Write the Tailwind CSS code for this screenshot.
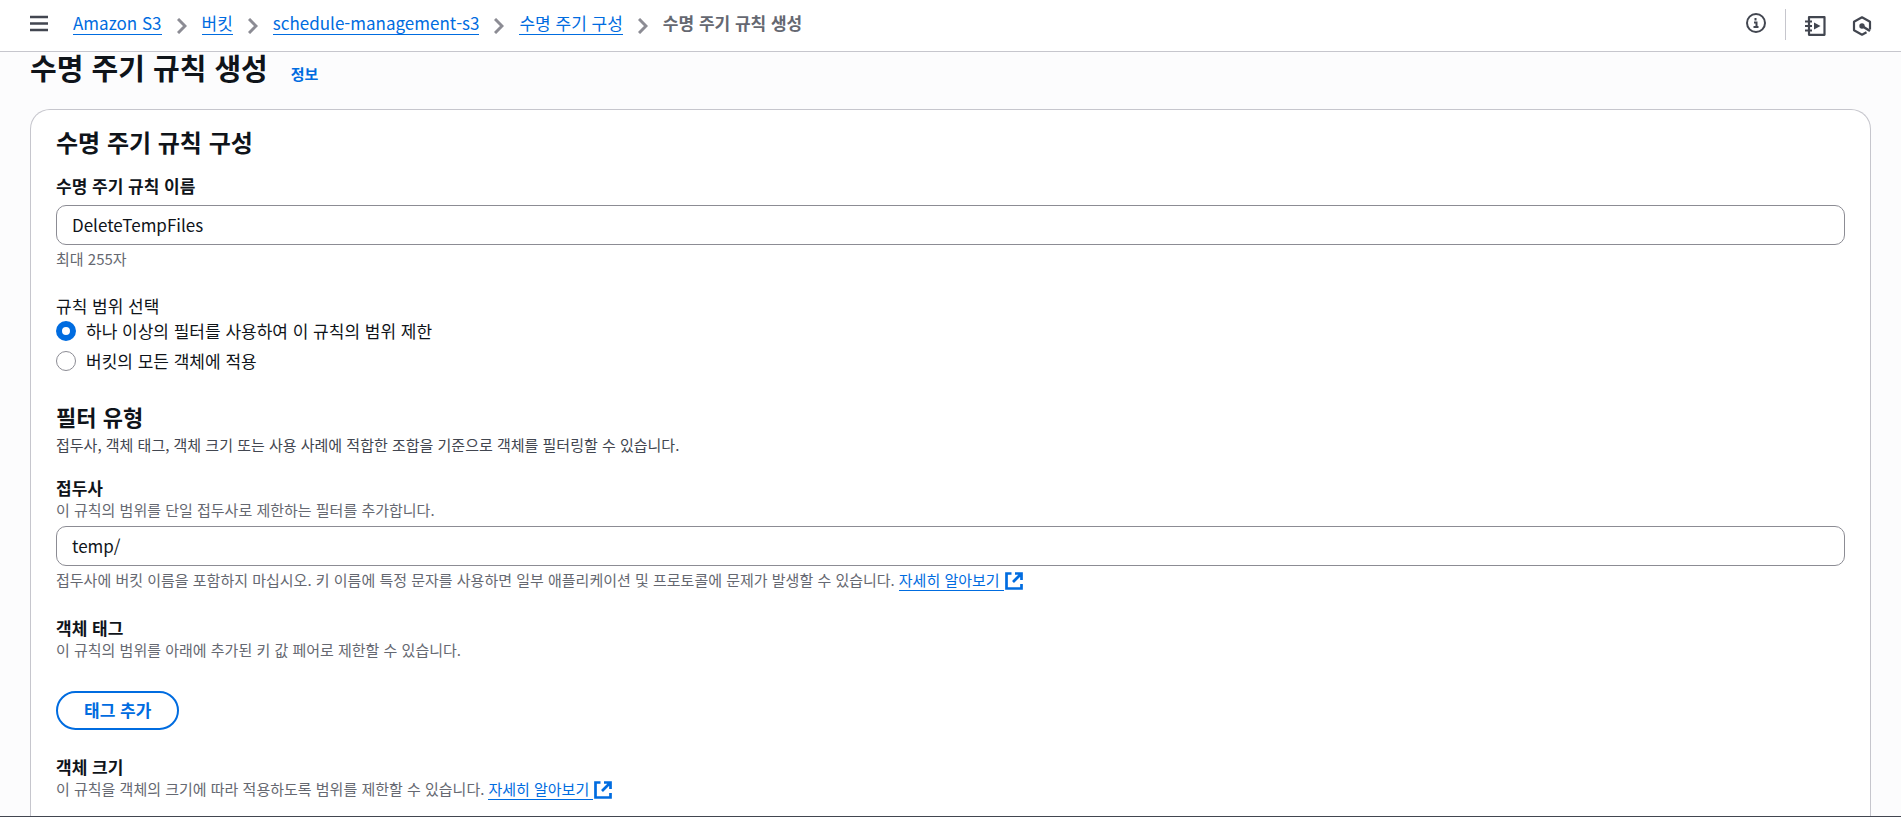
<!DOCTYPE html>
<html lang="ko">
<head>
    <meta charset="UTF-8">
    <meta name="viewport" content="width=device-width, initial-scale=1.0">
    <title>수명 주기 규칙 생성</title>
    <script src="https://cdn.jsdelivr.net/npm/@tailwindcss/browser@4"></script>
    <style>
        body { font-family: 'Noto Sans CJK KR', 'Noto Sans', sans-serif; }
    </style>
</head>
<body class="h-screen flex flex-col overflow-hidden bg-[#fcfcfd] text-[#0f141a] text-[17px] leading-[25px] border-b border-[#424650]">
    <!-- Top bar -->
    <header class="shrink-0 h-[52px] flex items-center justify-between bg-white border-b border-[#c6c6cd] pl-[30px] pr-[29px]">
        <div class="flex items-center">
            <button type="button" aria-label="메뉴" class="mr-[25px] text-[#424650]">
                <svg class="block w-[18px] h-[18px] mb-[6px]" viewBox="0 0 18 18" fill="none" stroke="currentColor" stroke-width="2.400"><path d="M0 3h18M0 9.500h18M0 16h18"/></svg>
            </button>
            <nav aria-label="탐색 경로">
                <ol class="flex items-center gap-[15px] pb-[6px] leading-[23px]">
                    <li><a href="#" class="block border-b border-[#006ce0] text-[#006ce0]">Amazon S3</a></li>
                    <li aria-hidden="true"><svg class="block w-[10px] h-[16px] mt-[6px] text-[#8c8c94]" viewBox="0 0 10 16" fill="none" stroke="currentColor" stroke-width="3"><path d="M1 1l7 7-7 7"/></svg></li>
                    <li><a href="#" class="block border-b border-[#006ce0] text-[#006ce0]">버킷</a></li>
                    <li aria-hidden="true"><svg class="block w-[10px] h-[16px] mt-[6px] text-[#8c8c94]" viewBox="0 0 10 16" fill="none" stroke="currentColor" stroke-width="3"><path d="M1 1l7 7-7 7"/></svg></li>
                    <li><a href="#" class="block border-b border-[#006ce0] text-[#006ce0]">schedule-management-s3</a></li>
                    <li aria-hidden="true"><svg class="block w-[10px] h-[16px] mt-[6px] text-[#8c8c94]" viewBox="0 0 10 16" fill="none" stroke="currentColor" stroke-width="3"><path d="M1 1l7 7-7 7"/></svg></li>
                    <li><a href="#" class="block border-b border-[#006ce0] text-[#006ce0]">수명 주기 구성</a></li>
                    <li aria-hidden="true"><svg class="block w-[10px] h-[16px] mt-[6px] text-[#8c8c94]" viewBox="0 0 10 16" fill="none" stroke="currentColor" stroke-width="3"><path d="M1 1l7 7-7 7"/></svg></li>
                    <li class="font-bold text-[#656871]">수명 주기 규칙 생성</li>
                </ol>
            </nav>
        </div>
        <div class="flex items-center text-[#424650]">
            <button type="button" aria-label="정보">
                <svg class="block w-5 h-5 mb-[6px]" viewBox="0 0 20 20" fill="none" stroke="currentColor" stroke-width="2"><circle cx="10" cy="10" r="9"/><path d="M9.500 5v2.500M8 9.500h2.500V14M7.500 14h5"/></svg>
            </button>
            <div class="w-px h-[31px] bg-[#c6c6cd] mx-[19px] mb-[2px]"></div>
            <button type="button" aria-label="자습서" class="mr-[26px]">
                <svg class="block w-[21px] h-5 mt-px" viewBox="0 0 21 20" fill="none" stroke="currentColor" stroke-width="2.200"><path d="M4 1.200h15.500v17.600H4z" stroke-linejoin="round"/><path d="M0 5.500h7M0 10h7M0 14.500h7"/><path d="M9 6.500v7l6.500-3.500z" fill="currentColor" stroke="none"/></svg>
            </button>
            <button type="button" aria-label="도구">
                <svg class="block w-5 h-5 mt-px" viewBox="0 0 20 20" fill="none" stroke="currentColor" stroke-width="2.200" stroke-linejoin="round"><path d="M18 13.500V5.700L10 1.300 2 5.700v8.600l8 4.400 4.500-2.500"/><circle cx="10" cy="10" r="2.700" fill="currentColor" stroke="none"/><path d="M10 10l8 5" stroke-width="2.600"/></svg>
            </button>
        </div>
    </header>

    <main class="flex-1 min-h-0 flex flex-col px-[30px]">
        <div class="shrink-0 flex items-baseline gap-[23px] mb-[25px]">
            <h1 class="text-[29px] leading-[30px] font-bold">수명 주기 규칙 생성</h1>
            <a href="#" class="text-[15px] leading-5 font-bold text-[#006ce0]">정보</a>
        </div>

        <!-- Rule configuration -->
        <form class="flex-1 bg-white border border-b-0 border-[#c6c6cd] rounded-t-[20px] px-[25px] pt-[18px]">
            <h2 class="text-[24px] leading-[28px] font-bold mb-[17px]">수명 주기 규칙 구성</h2>

            <div class="mb-6">
                <label for="ruleName" class="block font-bold mb-[7px]">수명 주기 규칙 이름</label>
                <input type="text" id="ruleName" value="DeleteTempFiles" class="block w-full h-10 px-[15px] pb-[2px] bg-white border border-[#8c8c94] rounded-[10px]">
                <p class="text-[15px] leading-5 text-[#656871] mt-1">최대 255자</p>
            </div>

            <fieldset class="mb-[29px]">
                <legend>규칙 범위 선택</legend>
                <div class="flex flex-col gap-[5px]">
                    <label class="flex items-center gap-[10px]">
                        <input type="radio" name="scope" checked class="appearance-none w-5 h-5 rounded-full bg-white border border-[#8c8c94] checked:border-[6px] checked:border-[#006ce0]">
                        하나 이상의 필터를 사용하여 이 규칙의 범위 제한
                    </label>
                    <label class="flex items-center gap-[10px]">
                        <input type="radio" name="scope" class="appearance-none w-5 h-5 rounded-full bg-white border border-[#8c8c94] checked:border-[6px] checked:border-[#006ce0]">
                        버킷의 모든 객체에 적용
                    </label>
                </div>
            </fieldset>

            <div class="mb-5">
                <h3 class="text-[22px] leading-[28px] font-bold mb-[5px]">필터 유형</h3>
                <p class="text-[15px] leading-5 text-[#424650]">접두사, 객체 태그, 객체 크기 또는 사용 사례에 적합한 조합을 기준으로 객체를 필터링할 수 있습니다.</p>
            </div>

            <div class="mb-6">
                <label for="prefix" class="block font-bold">접두사</label>
                <p class="text-[15px] leading-5 text-[#656871] mb-[6px]">이 규칙의 범위를 단일 접두사로 제한하는 필터를 추가합니다.</p>
                <input type="text" id="prefix" value="temp/" class="block w-full h-10 px-[15px] pb-[2px] bg-white border border-[#8c8c94] rounded-[10px]">
                <p class="flex text-[15px] leading-5 text-[#656871] mt-1">
                    접두사에 버킷 이름을 포함하지 마십시오. 키 이름에 특정 문자를 사용하면 일부 애플리케이션 및 프로토콜에 문제가 발생할 수 있습니다.
                    <a href="#" class="flex items-center ml-1 text-[#006ce0]">
                        <span class="border-b border-[#006ce0]">자세히 알아보기&nbsp;</span>
                        <svg class="w-[18px] h-[18px] ml-px" viewBox="0 0 18 18" fill="none" stroke="currentColor" stroke-width="2.700"><path d="M6.500 1.500h-5v15h15V12M10 1.500h6.500V8M16 2L8 10"/></svg>
                    </a>
                </p>
            </div>

            <div class="mb-6">
                <h4 class="font-bold">객체 태그</h4>
                <p class="text-[15px] leading-5 text-[#656871] mb-[31px]">이 규칙의 범위를 아래에 추가된 키 값 페어로 제한할 수 있습니다.</p>
                <button type="button" class="block h-[39px] px-[26px] pb-[2px] border-2 border-[#006ce0] rounded-full font-bold text-[#006ce0]">태그 추가</button>
            </div>

            <div>
                <h4 class="font-bold">객체 크기</h4>
                <p class="flex text-[15px] leading-5 text-[#656871]">
                    이 규칙을 객체의 크기에 따라 적용하도록 범위를 제한할 수 있습니다.
                    <a href="#" class="flex items-center ml-1 text-[#006ce0]">
                        <span class="border-b border-[#006ce0]">자세히 알아보기&nbsp;</span>
                        <svg class="w-[18px] h-[18px] ml-px" viewBox="0 0 18 18" fill="none" stroke="currentColor" stroke-width="2.700"><path d="M6.500 1.500h-5v15h15V12M10 1.500h6.500V8M16 2L8 10"/></svg>
                    </a>
                </p>
            </div>
        </form>
    </main>
</body>
</html>
